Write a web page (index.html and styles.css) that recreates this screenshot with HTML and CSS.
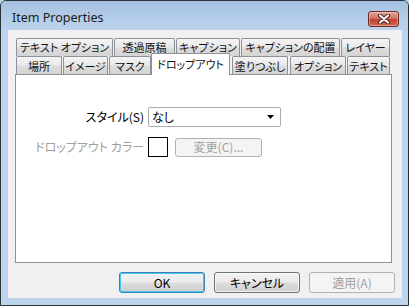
FILE: index.html
```html
<!DOCTYPE html>
<html lang="ja">
<head>
<meta charset="utf-8">
<title>Item Properties</title>
<link rel="stylesheet" href="styles.css">
</head>
<body>
<div class="window">
  <div class="titlebar">
    <span class="title">Item Properties</span>
    <span class="close">
      <svg width="16" height="10" viewBox="0 0 16 10">
        <path d="M4 1.5 L12 8.5 M12 1.5 L4 8.5" stroke="#4a1a1a" stroke-width="4" stroke-linecap="round"/>
        <path d="M4 1.5 L12 8.5 M12 1.5 L4 8.5" stroke="#ffffff" stroke-width="2.2" stroke-linecap="round"/>
      </svg>
    </span>
  </div>
  <div class="client">
    <div class="tabctl">
      <div class="tabrow row1">
        <div class="tab">テキスト オプション</div>
        <div class="tab">透過原稿</div>
        <div class="tab">キャプション</div>
        <div class="tab">キャプションの配置</div>
        <div class="tab">レイヤー</div>
      </div>
      <div class="tabrow row2">
        <div class="tab">場所</div>
        <div class="tab">イメージ</div>
        <div class="tab">マスク</div>
        <div class="tab selected">ドロップアウト</div>
        <div class="tab">塗りつぶし</div>
        <div class="tab">オプション</div>
        <div class="tab">テキスト</div>
      </div>
      <div class="panel">
        <div class="form">
          <span class="lbl">スタイル(S)</span>
          <div class="select">
            <span class="select-text">なし</span>
            <svg class="arrow" width="7" height="4" viewBox="0 0 7 4"><path d="M0 0 H7 L3.5 4 Z" fill="#000"/></svg>
          </div>
          <span class="lbl disabled">ドロップアウト カラー</span>
          <div class="colorrow">
            <span class="swatch"></span>
            <span class="btn small disabled">変更(C)...</span>
          </div>
        </div>
      </div>
    </div>
    <div class="buttons">
      <span class="btn default">OK</span>
      <span class="btn">キャンセル</span>
      <span class="btn disabled">適用(A)</span>
    </div>
  </div>
</div>
</body>
</html>
```

FILE: styles.css
```css
* { box-sizing: border-box; }
html, body {
  margin: 0;
  padding: 0;
  background: #bcd4ec;
}
body {
  font-family: "Noto Sans CJK JP", "Noto Sans", sans-serif;
  font-size: 12px;
  font-feature-settings: "palt";
  color: #000;
}
.window {
  width: 409px;
  height: 306px;
  border: 1px solid #2a3138;
  border-radius: 6px 6px 0 0;
  background: #bcd4ec;
  padding: 0 6px 7px 7px;
  display: flex;
  flex-direction: column;
  overflow: hidden;
}
.titlebar {
  height: 29px;
  flex: none;
  margin: 0 -6px 0 -7px;
  padding: 0 9px 0 11px;
  display: flex;
  align-items: flex-start;
  justify-content: space-between;
  background: linear-gradient(#a4c1e0, #b4cde8 60%, #bad2ec);
}
.title {
  font-family: "Noto Sans", "Open Sans", sans-serif;
  font-size: 12.5px;
  color: #1b1b1b;
  margin-top: 9px;
  line-height: 16px;
}
.close {
  width: 31px;
  height: 16px;
  margin-top: 10px;
  border: 1px solid #6b2a26;
  border-radius: 3px;
  background: linear-gradient(#e3a295, #d07563 45%, #c0412f 55%, #d06a52);
  display: flex;
  align-items: center;
  justify-content: center;
  box-shadow: inset 0 0 0 1px rgba(255,255,255,0.35);
}
.client {
  flex: 1;
  background: #f0f0f0;
  display: flex;
  flex-direction: column;
  padding: 8px 10px 0 7px;
}
.tabctl {
  display: flex;
  flex-direction: column;
}
.tabrow {
  display: flex;
  height: 18px;
  padding-left: 1px;
  align-items: flex-end;
}
.tab {
  height: 18px;
  border: 1px solid #8e9199;
  border-bottom: none;
  border-radius: 2px 2px 0 0;
  background: linear-gradient(#f4f4f4, #e9e9e9 45%, #dcdcdc 55%, #d4d4d4);
  display: flex;
  align-items: flex-start;
  justify-content: center;
  white-space: nowrap;
  font-size: 11px;
  line-height: 14px;
  padding-top: 1px;
  flex: none;
  color: #111;
}
.row1 .tab { margin-right: 1px; }
.row1 .tab:nth-child(1) { width: 97px; }
.row1 .tab:nth-child(2) { width: 61px; }
.row1 .tab:nth-child(3) { width: 64px; }
.row1 .tab:nth-child(4) { width: 99px; }
.row1 .tab:nth-child(5) { width: 49px; }
.row2 .tab { padding-top: 2px; }
.row2 .tab:nth-child(1) { width: 46px; }
.row2 .tab:nth-child(2) { width: 45px; margin-left: 1px; }
.row2 .tab:nth-child(3) { width: 42px; margin-left: 1px; }
.row2 .tab:nth-child(5) { width: 56px; margin-left: 2px; }
.row2 .tab:nth-child(6) { width: 56px; margin-left: 2px; }
.row2 .tab:nth-child(7) { width: 43px; margin-left: 1px; }
.row2 .tab.selected {
  width: 79px;
  height: 22px;
  margin-bottom: -1px;
  background: #ffffff;
  position: relative;
  z-index: 2;
  padding-top: 3px;
}
.panel {
  height: 189px;
  border: 1px solid #8e9199;
  background: #ffffff;
  position: relative;
  z-index: 1;
  padding-top: 32px;
}
.form {
  display: grid;
  grid-template-columns: 128px auto;
  column-gap: 4px;
  row-gap: 10px;
  align-items: center;
}
.lbl {
  text-align: right;
  white-space: nowrap;
  line-height: 20px;
}
.lbl.disabled { color: #a0a0a0; }
.select {
  width: 133px;
  height: 20px;
  border: 1px solid #a5acb5;
  border-radius: 2px;
  background: #fff;
  display: flex;
  align-items: center;
  justify-content: space-between;
  padding: 0 6px 0 3px;
}
.select-text { line-height: 16px; }
.colorrow {
  display: flex;
  align-items: center;
  gap: 7px;
}
.swatch {
  width: 20px;
  height: 20px;
  border: 1px solid #000;
  background: #fff;
}
.buttons {
  display: flex;
  justify-content: flex-end;
  gap: 9px;
  margin-top: 9px;
  margin-right: -3px;
}
.btn {
  width: 86px;
  height: 21px;
  border: 1px solid #707070;
  border-radius: 3px;
  background: linear-gradient(#f2f2f2, #ebebeb 48%, #dddddd 52%, #cfcfcf);
  display: flex;
  align-items: center;
  justify-content: center;
  line-height: 14px;
  box-shadow: inset 0 0 0 1px rgba(255,255,255,0.7);
}
.btn.default {
  border-color: #3c7fb1;
  box-shadow: inset 0 0 0 1px #48c6f4;
}
.btn.disabled {
  border-color: #adb2b5;
  background: #f4f4f4;
  color: #a0a0a0;
  box-shadow: none;
}
.btn.small {
  width: 87px;
  height: 19px;
}
```
